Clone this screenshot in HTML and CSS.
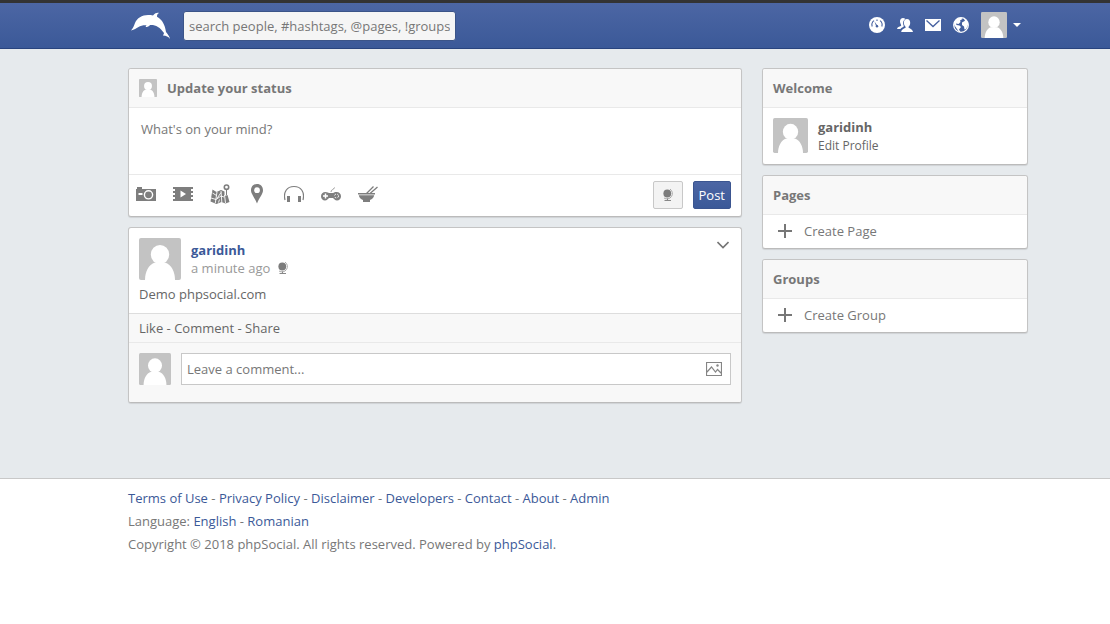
FILE: index.html
```html
<!DOCTYPE html>
<html lang="en">
<head>
<meta charset="utf-8">
<meta name="viewport" content="width=device-width, initial-scale=1">
<title>phpSocial</title>
<link rel="stylesheet" href="styles.css">
</head>
<body>
<svg class="sprite" aria-hidden="true">
  <symbol id="avatar" viewBox="0 0 42 42">
    <rect width="42" height="42" rx="2" fill="#c3c3c3"/>
    <ellipse cx="21" cy="16.500" rx="9.200" ry="9.500" fill="#fff"/>
    <path fill="#fff" d="M16 24.500h10c6.500 2 10 9.500 10 17.500H6c0-8 3.500-15.500 10-17.500z"/>
  </symbol>
  <symbol id="globe" viewBox="0 0 12 14">
    <circle cx="5.300" cy="5.500" r="3.900" fill="#7c7c7c"/>
    <path d="M8 1a5.200 5.200 0 0 1-6 9" fill="none" stroke="#aaa" stroke-width="1"/>
    <path d="M5.500 10.500v2M2.500 12.500h6.500" fill="none" stroke="#888" stroke-width="1"/>
  </symbol>
  <symbol id="plus" viewBox="0 0 14 14">
    <path d="M7 0v14M0 7h14" stroke="#777" stroke-width="2"/>
  </symbol>
</svg>

<header class="topbar">
  <div class="wrap topbar-row">
    <a class="logo" href="#" aria-label="Home">
      <svg viewBox="0 0 41 28"><path fill="#fff" d="M1 18.500C3 16 4 14 5 11 7 6 12 3 18 3c2 0 3.500.2 5 .4C25 1 27.500.5 29 1c-2 1-2 2.500-2 3.800 5.500 3.200 8 8.200 9 15.200 1.500 2 3.500 4 4 7-2-2.500-3.500-3-7-3.400.5-1.400 1-1.800 1-2.600-4-6-9-8.500-14-8-1 1.500-2.500 2-4.500 2l1-1.600c-3-.2-6 .4-8 1.600-2.500 1.600-4 2.500-7.500 3.500z"/></svg>
    </a>
    <input class="search" type="text" aria-label="Search" placeholder="search people, #hashtags, @pages, !groups">
    <nav class="topnav">
      <a href="#" aria-label="News feed"><svg viewBox="0 0 16 16"><circle cx="8" cy="8" r="8" fill="#fff"/><path d="M3.200 9.500A5.300 5.300 0 0 1 5 3.600M11 3.600a5.300 5.300 0 0 1 1.800 5.900M8 2.400v1.500" fill="none" stroke="#4560a0" stroke-width="1.100"/><path d="M7.200 9.500l-1.700-5 3.200 4.600z" fill="#4560a0"/><circle cx="8" cy="9.300" r="1.200" fill="#4560a0"/></svg></a>
      <a href="#" aria-label="Friends"><svg viewBox="0 0 16 16"><path fill="#fff" d="M6 1c1 0 1.800.4 2.300 1C6.500 3 5.800 5 6.200 7.200c.2 1 .5 1.600.8 2.100-.7.900-2.500 1.400-3.600 2.700H0c.3-2 2.300-2 3.800-2.900C5 8.300 3 7 3 4.300 3 2.300 4.200 1 6 1z"/><path fill="#fff" d="M10 2c2 0 3.200 1.500 3.200 3.700 0 2-.8 3.400-1.800 4.200 0 1.600 4 1.300 4.600 5.100H4.200c.4-3.800 4.600-3.500 4.600-5.100-1-.8-1.900-2.200-1.900-4.200C6.900 3.500 8 2 10 2z"/></svg></a>
      <a href="#" aria-label="Messages"><svg viewBox="0 0 16 16"><path d="M0 2h16v12H0z" fill="#fff"/><path d="M1.500 3.500L8 9.500l6.500-6" fill="none" stroke="#4560a0" stroke-width="1.300"/></svg></a>
      <a href="#" aria-label="Notifications"><svg viewBox="0 0 16 16"><circle cx="8" cy="8" r="7.300" fill="none" stroke="#fff" stroke-width="1.300"/><path fill="#fff" d="M1 5l3-3.500 4-1L9.500 2 7 3.500 7.500 5 5.500 7 3 6.500 3.500 8l3 .5L8 10l-2 2.500L7.500 15H6l-2-3-2.800-4zM9 5.500l3-1.800L11 2l2 .5 2.300 4L14.500 9l-1.300 3-1.700.5-.5-3L9 8z"/></svg></a>
      <button class="profile" type="button" aria-label="Account menu"><svg class="profile-pic"><use href="#avatar"/></svg><span class="caret"></span></button>
    </nav>
  </div>
</header>

<main class="page">
  <div class="wrap columns">
    <section class="feed">
      <form class="card">
        <div class="card-head">
          <svg class="pic-18"><use href="#avatar"/></svg>
          <label for="status">Update your status</label>
        </div>
        <textarea class="status" id="status" placeholder="What's on your mind?"></textarea>
        <div class="tools">
          <button type="button" aria-label="Photo"><svg viewBox="0 0 20 20"><path fill="#7e7e7e" fill-rule="evenodd" d="M0 5h1V3h5v2h14v12H0zM12.500 6a4.800 4.800 0 1 0 0 9.600 4.800 4.800 0 0 0 0-9.600zM2.500 9v2h4V9z"/><circle cx="12.500" cy="10.800" r="3.400" fill="#7e7e7e"/></svg></button>
          <button type="button" aria-label="Video"><svg viewBox="0 0 20 20"><path fill="#7e7e7e" fill-rule="evenodd" d="M0 3h20v2h-2v2h2v2h-2v2h2v2h-2v2h2v2H0v-2h2v-2H0v-2h2V9H0V7h2V5H0zM7.500 6.500v7l5.500-3.500z"/></svg></button>
          <button type="button" aria-label="Map"><svg viewBox="0 0 20 20"><path fill="#7e7e7e" d="M2.500 5.500L6.500 8 11 6l3.500 1.500V12l3-1 2 7-4 1.500-4-1.500-5 2L.5 17.500z"/><path d="M7 8L5.300 19M11 7l.8 11M14.500 11l1 8M2.500 9l4 2.500M7 14.500l4-6M1 14l5 1.500 5-3.500 3 1M8.500 18.500l1-3" fill="none" stroke="#fff" stroke-width=".9"/><path d="M16.500 11V6" stroke="#7e7e7e"/><circle cx="16.500" cy="3.200" r="2.200" fill="#fff" stroke="#7e7e7e" stroke-width="1.600"/></svg></button>
          <button type="button" aria-label="Location"><svg viewBox="0 0 20 20"><path fill="#7e7e7e" fill-rule="evenodd" d="M10 0c3.700 0 6 2.700 6 6.200C16 10 12.500 13 10 19.500 7.500 13 4 10 4 6.200 4 2.700 6.300 0 10 0zm0 3.300a2.900 2.900 0 1 0 0 5.800 2.900 2.900 0 0 0 0-5.800z"/></svg></button>
          <button type="button" aria-label="Music"><svg viewBox="0 0 20 20"><path d="M1 16C-1 8 3 2.500 10 2.500S21 8 19 16" fill="none" stroke="#7e7e7e" stroke-width="1.200"/><path d="M3 12h3v6H3zM14 12h3v6h-3z" fill="#7e7e7e"/></svg></button>
          <button type="button" aria-label="Game"><svg viewBox="0 0 20 20"><path d="M10 8c0-3 2.500-1.500 3.500-4.500" fill="none" stroke="#999" stroke-width="1"/><path fill="#7e7e7e" d="M4.500 8c2 0 2.800.8 3.500 1h4c1-.5 2-1 3.500-1 2.700 0 4.500 1.800 4.500 4.300 0 2.600-1.700 4.200-4 4.200-2 0-3-1.800-4-2.500H8c-1 .7-2 2.500-4 2.500-2.300 0-4-1.600-4-4.200C0 9.800 1.800 8 4.500 8z"/><path d="M4.500 9.500v5M2 12h5" stroke="#fff" stroke-width="1.500"/><circle cx="15.500" cy="12" r="2" fill="none" stroke="#fff" stroke-dasharray="1.600 1.500"/></svg></button>
          <button type="button" aria-label="Food"><svg viewBox="0 0 20 20"><path fill="#7e7e7e" d="M0 9h17v1.500H0zM.8 11.200h15.400c-.5 2.600-2 4-4.200 4.800v2H5v-2c-2.300-.8-3.700-2.200-4.200-4.800z"/><path d="M8.500 9.500l7-7M12 9.500L19.500 3" stroke="#7e7e7e" stroke-width="1.300"/></svg></button>
          <span class="spacer"></span>
          <button class="privacy" type="button" aria-label="Privacy"><svg class="globe"><use href="#globe"/></svg></button>
          <button class="post-btn" type="submit">Post</button>
        </div>
      </form>

      <article class="card">
        <div class="post">
          <div class="post-top">
            <svg class="pic-42"><use href="#avatar"/></svg>
            <div class="post-meta">
              <a class="author" href="#">garidinh</a>
              <span class="time">a minute ago <svg class="globe"><use href="#globe"/></svg></span>
            </div>
            <button class="more" type="button" aria-label="Post options"><svg viewBox="0 0 12 8"><path d="M0.500 1L6 6.500 11.500 1" fill="none" stroke="#777" stroke-width="1.600"/></svg></button>
          </div>
          <p class="message">Demo phpsocial.com</p>
        </div>
        <div class="actions"><a href="#">Like</a> - <a href="#">Comment</a> - <a href="#">Share</a></div>
        <div class="reply">
          <svg class="pic-32"><use href="#avatar"/></svg>
          <div class="reply-box">
            <input type="text" aria-label="Comment" placeholder="Leave a comment...">
            <button type="button" aria-label="Attach image"><svg viewBox="0 0 16 14"><path d="M.5.500h15v13H.5zM1 10l4.500-5 4 5 2-2.500L15 11" fill="none" stroke="#858585" stroke-width="1.200"/><circle cx="11.500" cy="3.500" r="1.200" fill="#888"/></svg></button>
          </div>
        </div>
      </article>
    </section>

    <aside class="side">
      <section class="card">
        <h2 class="card-head">Welcome</h2>
        <div class="welcome">
          <svg class="pic-35"><use href="#avatar"/></svg>
          <div class="welcome-text"><a class="name" href="#">garidinh</a><a class="edit" href="#">Edit Profile</a></div>
        </div>
      </section>
      <section class="card">
        <h2 class="card-head">Pages</h2>
        <a class="create" href="#"><svg class="plus"><use href="#plus"/></svg>Create Page</a>
      </section>
      <section class="card">
        <h2 class="card-head">Groups</h2>
        <a class="create" href="#"><svg class="plus"><use href="#plus"/></svg>Create Group</a>
      </section>
    </aside>
  </div>
</main>

<footer class="footer">
  <div class="wrap">
    <p><a href="#">Terms of Use</a> - <a href="#">Privacy Policy</a> - <a href="#">Disclaimer</a> - <a href="#">Developers</a> - <a href="#">Contact</a> - <a href="#">About</a> - <a href="#">Admin</a></p>
    <p>Language: <a href="#">English</a> - <a href="#">Romanian</a></p>
    <p>Copyright © 2018 phpSocial. All rights reserved. Powered by <a href="#">phpSocial</a>.</p>
  </div>
</footer>
</body>
</html>
```
FILE: styles.css
```css
* { box-sizing: border-box; }
body {
  margin: 0;
  background: #fff;
  color: #777;
  font: 13px/18px "Open Sans", "Noto Sans", sans-serif;
}
a { color: inherit; text-decoration: none; }
p, h2 { margin: 0; }
svg { display: block; flex: none; }
button { font: inherit; padding: 0; border: 0; background: none; cursor: pointer; }
input, textarea { font: inherit; color: #555; outline: 0; }
::placeholder { color: #777; opacity: 1; }
.sprite { display: none; }
.wrap { padding: 0 82px 0 128px; }

.topbar {
  border-top: 3px solid #333;
  border-bottom: 1px solid #29447e;
  background: linear-gradient(#4c66a4, #3b5998);
}
.topbar-row { display: flex; align-items: center; height: 45px; }
.logo { margin: 0 12px 0 2px; }
.logo svg { width: 41px; height: 28px; }
.search {
  width: 273px;
  height: 30px;
  padding: 0 5px;
  border: 1px solid #3b5488;
  border-radius: 3px;
  background: #f5f5f5;
}
.topnav { display: flex; align-items: center; gap: 12px; margin-left: auto; padding-right: 7px; }
.topnav a svg { width: 16px; height: 16px; }
.topnav a { padding-bottom: 1px; }
.profile { display: flex; align-items: center; gap: 6px; padding-bottom: 1px; }
.profile-pic { width: 26px; height: 26px; }
.caret { border: 4px solid transparent; border-top-color: #fff; border-bottom: 0; }

.page { padding: 19px 0 75px; background: #e6eaed; }
.columns { display: flex; align-items: flex-start; gap: 20px; }
.feed { display: grid; flex: 1; gap: 10px; min-width: 0; }
.side { display: grid; flex: 0 0 266px; gap: 10px; }
.card {
  overflow: hidden;
  border: 1px solid #c4c4c4;
  border-bottom-color: #bbb;
  border-radius: 3px;
  background: #fff;
  box-shadow: 0 1px 1px rgba(0, 0, 0, 0.1);
}
.card-head {
  display: flex;
  align-items: center;
  gap: 10px;
  padding: 10px;
  border-bottom: 1px solid #e9e9e9;
  background: #f8f8f8;
  font-size: 13px;
  font-weight: 700;
}
.pic-18 { width: 18px; height: 18px; }
.pic-32 { width: 32px; height: 32px; }
.pic-35 { width: 35px; height: 35px; }
.pic-42 { width: 42px; height: 42px; }

.status { display: block; width: 100%; height: 66px; padding: 12px; border: 0; resize: none; }
.tools { display: flex; align-items: center; gap: 17px; padding: 6px 10px 7px 7px; border-top: 1px solid #e9e9e9; }
.tools button { padding-bottom: 2px; }
.tools svg { width: 20px; height: 20px; }
.tools .globe, .globe { width: 12px; height: 14px; }
.spacer { flex: 1; }
.tools .privacy {
  display: flex;
  align-items: center;
  justify-content: center;
  width: 30px;
  height: 28px;
  margin-right: -7px;
  padding: 0;
  border: 1px solid #c8c8c8;
  border-radius: 2px;
  background: #f3f3f3;
}
.tools .post-btn {
  height: 28px;
  padding: 0 5px;
  border: 1px solid #3b5590;
  border-radius: 2px;
  background: linear-gradient(#4c66a4, #3b5998);
  color: #fff;
}

.post { padding: 10px; }
.post-top { display: flex; gap: 10px; }
.post-meta { display: grid; flex: 1; align-content: center; }
.author { color: #3b5998; font-weight: 700; }
.time { display: flex; align-items: center; gap: 7px; color: #999; }
.more { align-self: flex-start; padding: 3px 2px; }
.more svg { width: 12px; height: 8px; }
.message { padding-top: 5px; color: #666; }
.actions { padding: 5px 10px; border: solid #e9e9e9; border-width: 1px 0; border-top-color: #ddd; background: #f8f8f8; color: #666; }
.reply { display: flex; gap: 10px; padding: 10px 10px 17px; background: #f8f8f8; }
.reply-box { display: flex; flex: 1; align-items: center; height: 32px; padding: 0 8px 0 5px; border: 1px solid #c8c8c8; background: #fff; }
.reply-box input { flex: 1; min-width: 0; padding: 0; border: 0; background: none; }
.reply-box svg { width: 16px; height: 14px; }

.welcome { display: flex; gap: 10px; height: 56px; padding: 10px; }
.welcome-text { color: #666; }
.name, .edit { display: block; }
.name { font-weight: 700; }
.edit { font-size: 12px; line-height: 20px; }
.create { display: flex; align-items: center; gap: 12px; height: 33px; padding: 0 15px 2px; }
.plus { width: 14px; height: 14px; }

.footer { padding: 8px 0 64px; border-top: 1px solid #c8c8c8; line-height: 23px; }
.footer a { color: #3b5998; }
```
